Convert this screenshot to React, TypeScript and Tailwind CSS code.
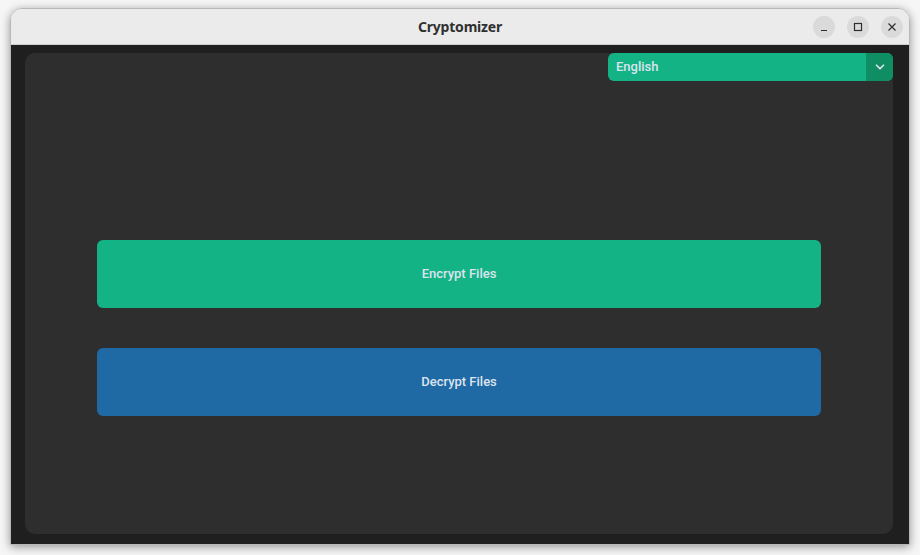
import { ChevronDown } from "lucide-react";

function WinButton({ children }: { children: React.ReactNode }) {
  return (
    <div className="w-[22px] h-[22px] rounded-full bg-[#dadada] flex items-center justify-center text-[#2e2e2e]">
      {children}
    </div>
  );
}

export default function App() {
  return (
    <div className="w-[920px] h-[555px] bg-[#f6f6f6] pt-[8px] pl-[10px] overflow-hidden">
      <div className="w-[900px] h-[537px] flex flex-col rounded-t-[12px] overflow-hidden shadow-[0_2px_10px_rgba(0,0,0,0.4)] border border-[#b8b8b8]">
        {/* title bar */}
        <div className="h-[36px] shrink-0 bg-[#ebebeb] border-b border-[#cfcfcf] grid grid-cols-[1fr_auto_1fr] items-center">
          <div />
          <div className="text-[14px] font-bold text-[#303030] tracking-[-0.2px]" style={{ fontFamily: '"Noto Sans", "DejaVu Sans", sans-serif' }}>
            Cryptomizer
          </div>
          <div className="flex justify-end gap-[12px] pr-[6px]">
            <WinButton>
              <svg width="10" height="10" viewBox="0 0 10 10">
                <path d="M2 8.5 H8" stroke="currentColor" strokeWidth="1.2" />
              </svg>
            </WinButton>
            <WinButton>
              <svg width="10" height="10" viewBox="0 0 10 10">
                <rect x="1.5" y="1.5" width="7" height="7" fill="none" stroke="currentColor" strokeWidth="1.2" />
              </svg>
            </WinButton>
            <WinButton>
              <svg width="10" height="10" viewBox="0 0 10 10">
                <path d="M1.5 1.5 L8.5 8.5 M8.5 1.5 L1.5 8.5" stroke="currentColor" strokeWidth="1.2" />
              </svg>
            </WinButton>
          </div>
        </div>

        {/* body */}
        <div className="flex-1 bg-[#1f1f1f] pt-[8px] pl-[14px] pr-[16px] pb-[10px] flex">
          <div
            className="flex-1 rounded-[10px] bg-[#2e2e2e] flex flex-col"
            style={{ fontFamily: 'Roboto, "Liberation Sans", sans-serif' }}
          >
            <div className="flex justify-end">
              <div className="w-[285px] h-[28px] rounded-[6px] bg-[#13b386] flex overflow-hidden">
                <div className="flex-1 flex items-center pl-[8px] text-[13px] font-medium text-[#dce4ee]">English</div>
                <div className="w-[27px] bg-[#0f8d63] flex items-center justify-center text-[#dce4ee]">
                  <ChevronDown size={14} strokeWidth={3} />
                </div>
              </div>
            </div>

            <div className="px-[72px] pt-[159px] flex flex-col gap-[40px]">
              <div className="h-[68px] rounded-[6px] bg-[#13b386] flex items-center justify-center text-[13px] font-medium text-[#dce4ee]">
                Encrypt Files
              </div>
              <div className="h-[68px] rounded-[6px] bg-[#1f69a4] flex items-center justify-center text-[13px] font-medium text-[#dce4ee]">
                Decrypt Files
              </div>
            </div>
          </div>
        </div>
      </div>
    </div>
  );
}
